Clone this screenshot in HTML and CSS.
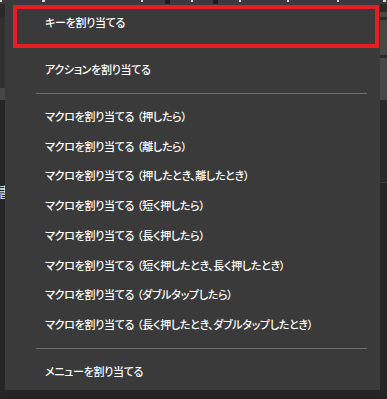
FILE: index.html
```html
<!DOCTYPE html>
<html lang="ja">
<head>
    <meta charset="UTF-8">
    <title>割り当てメニュー</title>
    <link rel="stylesheet" href="styles.css">
</head>
<body>
<div class="screen">
    <div class="topbar"></div>
    <div class="side left">
        <div class="band dark" style="height:14px"></div>
        <div class="band mid" style="height:70px"></div>
        <div class="band light" style="height:12px"></div>
        <div class="band base glyph">書</div>
    </div>
    <div class="menu">
        <div class="item first">キーを割り当てる</div>
        <div class="item second">アクションを割り当てる</div>
        <div class="sep"></div>
        <div class="item">マクロを割り当てる<span class="paren">（</span>押したら）</div>
        <div class="item">マクロを割り当てる<span class="paren">（</span>離したら）</div>
        <div class="item">マクロを割り当てる<span class="paren">（</span>押したとき、離したとき）</div>
        <div class="item">マクロを割り当てる<span class="paren">（</span>短く押したら）</div>
        <div class="item">マクロを割り当てる<span class="paren">（</span>長く押したら）</div>
        <div class="item">マクロを割り当てる<span class="paren">（</span>短く押したとき、長く押したとき）</div>
        <div class="item">マクロを割り当てる<span class="paren">（</span>ダブルタップしたら）</div>
        <div class="item">マクロを割り当てる<span class="paren">（</span>長く押したとき、ダブルタップしたとき）</div>
        <div class="sep"></div>
        <div class="item">メニューを割り当てる</div>
        <div class="mark"></div>
    </div>
    <div class="side right">
        <div class="band dark" style="height:8px"></div>
        <div class="band light" style="height:5px"></div>
        <div class="band dark" style="height:3px"></div>
        <div class="band light" style="height:35px"></div>
        <div class="band dark" style="height:3px"></div>
        <div class="band light" style="height:42px"></div>
        <div class="band dark" style="height:82px"></div>
        <div class="band line" style="height:1px"></div>
        <div class="band base"></div>
    </div>
</div>
</body>
</html>
```

FILE: styles.css
```css
* {
    box-sizing: border-box;
}

html, body {
    margin: 0;
    padding: 0;
}

body {
    background: #242424;
    font-family: "Noto Sans CJK JP", "Noto Sans", sans-serif;
    font-size: 11px;
    color: #ffffff;
}

.screen {
    width: 387px;
    height: 399px;
    overflow: hidden;
    display: grid;
    grid-template-columns: 5px 375px 7px;
    grid-template-rows: 4px 395px;
}

.topbar {
    grid-column: 1 / -1;
    background:
        linear-gradient(to right, #d8d8d8 0 2px, transparent 2px 42px, #d8d8d8 42px 45px, transparent 45px 141px,
            #d8d8d8 141px 143px, transparent 143px 191px, #d8d8d8 191px 193px, transparent 193px 239px,
            #d8d8d8 239px 241px, transparent 241px 287px, #d8d8d8 287px 289px, transparent 289px 337px,
            #d8d8d8 337px 339px, transparent 339px 383px, #d8d8d8 383px 386px, transparent 386px) top / 100% 2px no-repeat,
        linear-gradient(to right, #3a3a3a 0 165px, #1c1c1c 165px 170px, #3a3a3a 170px 213px, #1c1c1c 213px 218px, #3a3a3a 218px);
}

.side {
    display: flex;
    flex-direction: column;
    overflow: hidden;
}

.band {
    flex: none;
}

.band.dark {
    background: #2a2a2a;
}

.band.mid {
    background: #2f2f2f;
}

.band.light {
    background: #474747;
}

.band.line {
    background: #3c3c3c;
}

.band.base {
    flex: 1;
    background: #252525;
}

.glyph {
    direction: rtl;
    white-space: nowrap;
    padding-top: 83px;
    margin-right: -7px;
    font-size: 14px;
    line-height: 16px;
    color: #e8e8e8;
}

.menu {
    position: relative;
    height: 386px;
    padding-top: 4px;
    background: #3a3a3a;
    display: flex;
    flex-direction: column;
}

.item {
    height: 29.75px;
    padding-left: 40px;
    display: flex;
    align-items: center;
    white-space: nowrap;
    font-weight: 500;
    font-feature-settings: "palt";
    letter-spacing: -0.3px;
    line-height: 1;
}

.item .paren {
    margin-left: 3px;
}

.item.second {
    margin-top: 17px;
}

.sep {
    height: 1px;
    margin: 8px 13px 8px 31px;
    background: #6e6e6e;
    flex: none;
}

.mark {
    position: absolute;
    left: 8px;
    top: 1px;
    width: 366px;
    height: 43px;
    border: 4px solid #e81c24;
}
```
